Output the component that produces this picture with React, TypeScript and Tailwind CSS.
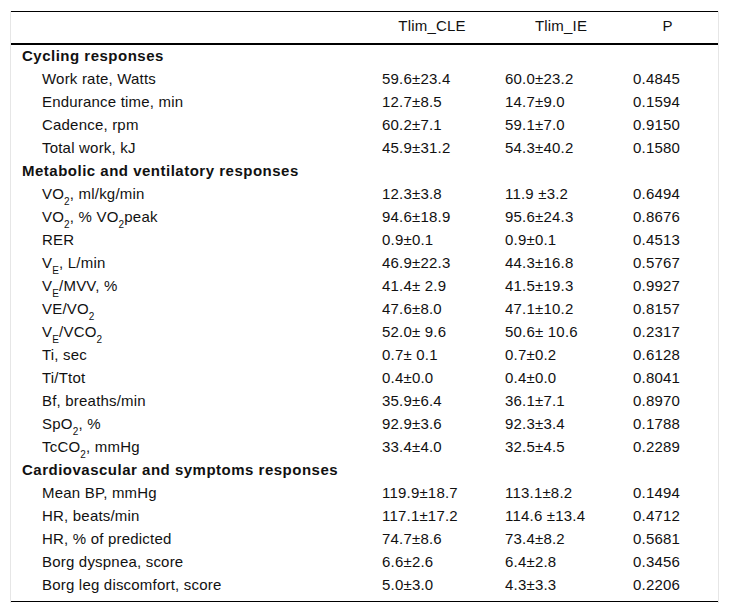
import type { ReactNode } from "react";

type Row =
  | { kind: "section"; label: string }
  | { kind: "item"; label: ReactNode; a: string; b: string; p: string };

const S = ({ children }: { children: ReactNode }) => (
  <sub className="relative top-[2px] align-sub text-[10px] leading-none">{children}</sub>
);

const rows: Row[] = [
  { kind: "section", label: "Cycling responses" },
  { kind: "item", label: "Work rate, Watts", a: "59.6±23.4", b: "60.0±23.2", p: "0.4845" },
  { kind: "item", label: "Endurance time, min", a: "12.7±8.5", b: "14.7±9.0", p: "0.1594" },
  { kind: "item", label: "Cadence, rpm", a: "60.2±7.1", b: "59.1±7.0", p: "0.9150" },
  { kind: "item", label: "Total work, kJ", a: "45.9±31.2", b: "54.3±40.2", p: "0.1580" },
  { kind: "section", label: "Metabolic and ventilatory responses" },
  { kind: "item", label: <>VO<S>2</S>, ml/kg/min</>, a: "12.3±3.8", b: "11.9 ±3.2", p: "0.6494" },
  { kind: "item", label: <>VO<S>2</S>, % VO<S>2</S>peak</>, a: "94.6±18.9", b: "95.6±24.3", p: "0.8676" },
  { kind: "item", label: "RER", a: "0.9±0.1", b: "0.9±0.1", p: "0.4513" },
  { kind: "item", label: <>V<S>E</S>, L/min</>, a: "46.9±22.3", b: "44.3±16.8", p: "0.5767" },
  { kind: "item", label: <>V<S>E</S>/MVV, %</>, a: "41.4± 2.9", b: "41.5±19.3", p: "0.9927" },
  { kind: "item", label: <>VE/VO<S>2</S></>, a: "47.6±8.0", b: "47.1±10.2", p: "0.8157" },
  { kind: "item", label: <>V<S>E</S>/VCO<S>2</S></>, a: "52.0± 9.6", b: "50.6± 10.6", p: "0.2317" },
  { kind: "item", label: "Ti, sec", a: "0.7± 0.1", b: "0.7±0.2", p: "0.6128" },
  { kind: "item", label: "Ti/Ttot", a: "0.4±0.0", b: "0.4±0.0", p: "0.8041" },
  { kind: "item", label: "Bf, breaths/min", a: "35.9±6.4", b: "36.1±7.1", p: "0.8970" },
  { kind: "item", label: <>SpO<S>2</S>, %</>, a: "92.9±3.6", b: "92.3±3.4", p: "0.1788" },
  { kind: "item", label: <>TcCO<S>2</S>, mmHg</>, a: "33.4±4.0", b: "32.5±4.5", p: "0.2289" },
  { kind: "section", label: "Cardiovascular and symptoms responses" },
  { kind: "item", label: "Mean BP, mmHg", a: "119.9±18.7", b: "113.1±8.2", p: "0.1494" },
  { kind: "item", label: "HR, beats/min", a: "117.1±17.2", b: "114.6 ±13.4", p: "0.4712" },
  { kind: "item", label: "HR, % of predicted", a: "74.7±8.6", b: "73.4±8.2", p: "0.5681" },
  { kind: "item", label: "Borg dyspnea, score", a: "6.6±2.6", b: "6.4±2.8", p: "0.3456" },
  { kind: "item", label: "Borg leg discomfort, score", a: "5.0±3.0", b: "4.3±3.3", p: "0.2206" },
];

const cols = "grid grid-cols-[363px_123px_128px_94px]";

export default function App() {
  return (
    <div className="min-h-[614px] bg-white px-[10px] pt-[11px] font-['Liberation_Sans',Arial,sans-serif] text-[15px] tracking-[0.2px] text-[#111]">
      <div className="w-[709px] border-x border-[#e6e6e6] pb-[1px]">
        <div className="border-t border-black">
          {/* header */}
          <div className={`${cols} h-[33px] items-center border-b-2 border-black pb-[3px]`}>
            <div />
            <div className="pr-[7px] text-center">Tlim_CLE</div>
            <div className="text-center">Tlim_IE</div>
            <div className="pr-[9px] text-center">P</div>
          </div>

          {rows.map((r, i) =>
            r.kind === "section" ? (
              <div key={i} className="flex h-[23px] items-center pl-[11px] font-bold tracking-[0.5px]">
                {r.label}
              </div>
            ) : (
              <div key={i} className={`${cols} h-[23px] items-center`}>
                <div className="pl-[31px]">{r.label}</div>
                <div className="pl-[8px]">{r.a}</div>
                <div className="pl-[8px]">{r.b}</div>
                <div className="pl-[8px]">{r.p}</div>
              </div>
            ),
          )}
        </div>
        <div className="mt-[4px] border-b border-black" />
      </div>
    </div>
  );
}
